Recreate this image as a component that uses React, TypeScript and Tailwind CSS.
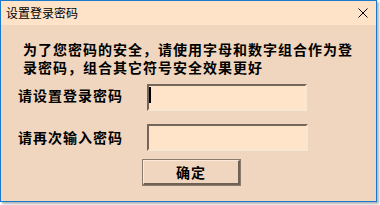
const cjk = "font-['Noto_Sans_CJK_SC','Noto_Sans',sans-serif]";

function SunkenBox({ width, caret }: { width: string; caret?: boolean }) {
  return (
    <div
      className={`${width} h-[27px] bg-[#ffe4ca] border-2 border-t-[#74675a] border-l-[#74675a] border-b-[#f9e7d6] border-r-[#f9e7d6] flex items-start`}
    >
      {caret ? <span className="mt-[1px] w-[2px] h-[16px] bg-black" /> : null}
    </div>
  );
}

function FieldRow({ label, labelTop, width, caret }: { label: string; labelTop: string; width: string; caret?: boolean }) {
  return (
    <div className="flex items-start">
      <span className={`w-[146px] shrink-0 pl-[17px] ${labelTop} text-[14px] leading-[18px] font-bold tracking-[1px] text-black`}>
        {label}
      </span>
      <SunkenBox width={width} caret={caret} />
    </div>
  );
}

export default function App() {
  return (
    <div className={`w-[380px] h-[205px] bg-white ${cjk}`}>
      <div className="w-[377px] h-[202px] border border-[#1979ca] bg-[#f0d6be] flex flex-col shadow-[2px_2px_2px_rgba(0,0,0,0.3)]">
        <div className="h-[24px] shrink-0 bg-[#ffe3c9] flex items-center justify-between pl-[5px] pr-[8px]">
          <span className="text-[12px] leading-[14px] text-black">设置登录密码</span>
          <svg width="10" height="10" viewBox="0 0 10 10" className="shrink-0">
            <path d="M0.5 0.5 L9.5 9.5 M9.5 0.5 L0.5 9.5" stroke="#000" strokeWidth="1" fill="none" />
          </svg>
        </div>

        <div className="flex flex-col">
          <div className="mt-[15px] ml-[22px] text-[14px] leading-[18px] font-bold tracking-[1px] text-black">
            <div className="whitespace-nowrap">为了您密码的安全，请使用字母和数字组合作为登</div>
            <div className="whitespace-nowrap">录密码，组合其它符号安全效果更好</div>
          </div>

          <div className="mt-[8px] flex flex-col gap-[13px]">
            <FieldRow label="请设置登录密码" labelTop="mt-[2px]" width="w-[160px]" caret />
            <FieldRow label="请再次输入密码" labelTop="mt-[4px]" width="w-[161px]" />
          </div>

          <div className="mt-[8px] ml-[141px]">
            <button
              type="button"
              className="w-[99px] h-[27px] bg-[#f0d6be] border border-[#8a7b6c] flex items-center justify-center"
            >
              <span className="w-full h-full flex items-center justify-center border-t border-l border-[#fdeadb] border-b-2 border-r-2 border-b-[#6e6254] border-r-[#6e6254] text-[14px] leading-[16px] font-bold tracking-[1px] text-black">
                确定
              </span>
            </button>
          </div>
        </div>
      </div>
    </div>
  );
}
